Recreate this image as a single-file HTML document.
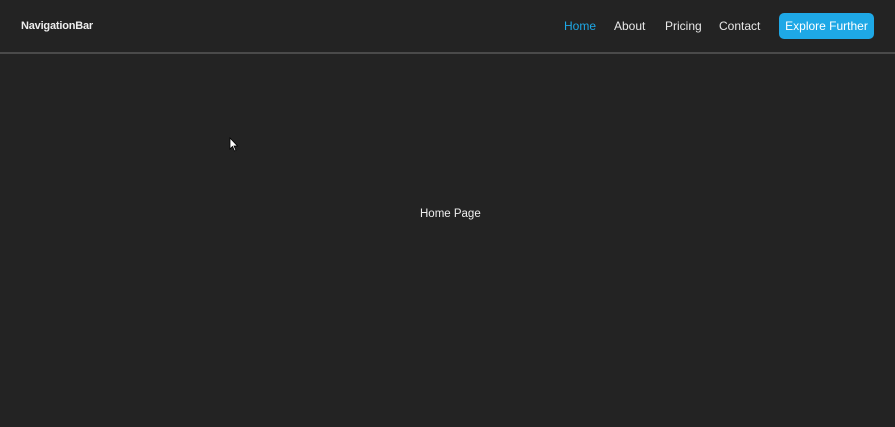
<!DOCTYPE html>
<html><head><style>
body{margin:0;background:#232323;width:895px;height:427px;overflow:hidden;font-family:"Liberation Sans",sans-serif;color:#eee;position:relative}
.nav{position:absolute;left:0;top:0;width:895px;height:52px;border-bottom:2px solid #4a4a4a}
.logo{position:absolute;left:21px;top:20px;font-size:11px;font-weight:bold;letter-spacing:-0.2px}
.l{position:absolute;top:19px;font-size:12px;color:#e8e8e8}
.btn{position:absolute;left:779px;top:13px;width:95px;height:26px;background:#1ea8e6;border-radius:5px;color:#fff;font-size:12px;text-align:center;line-height:26px}
.c{position:absolute;left:420px;top:208px;font-size:11.5px}
</style></head><body>
<div class="nav">
<div class="logo">NavigationBar</div>
<div class="l" style="left:564px;color:#1ea8e6">Home</div>
<div class="l" style="left:614px">About</div>
<div class="l" style="left:665px">Pricing</div>
<div class="l" style="left:719px">Contact</div>
<div class="btn">Explore Further</div>
</div>
<div class="c">Home Page</div>
<svg style="position:absolute;left:229px;top:137px" width="10" height="15"><path d="M1 1 L1 12 L3.5 9.5 L5.5 14 L7 13.3 L5 9 L8.5 9 Z" fill="#fff" stroke="#000" stroke-width="0.8"/></svg>
</body></html>
